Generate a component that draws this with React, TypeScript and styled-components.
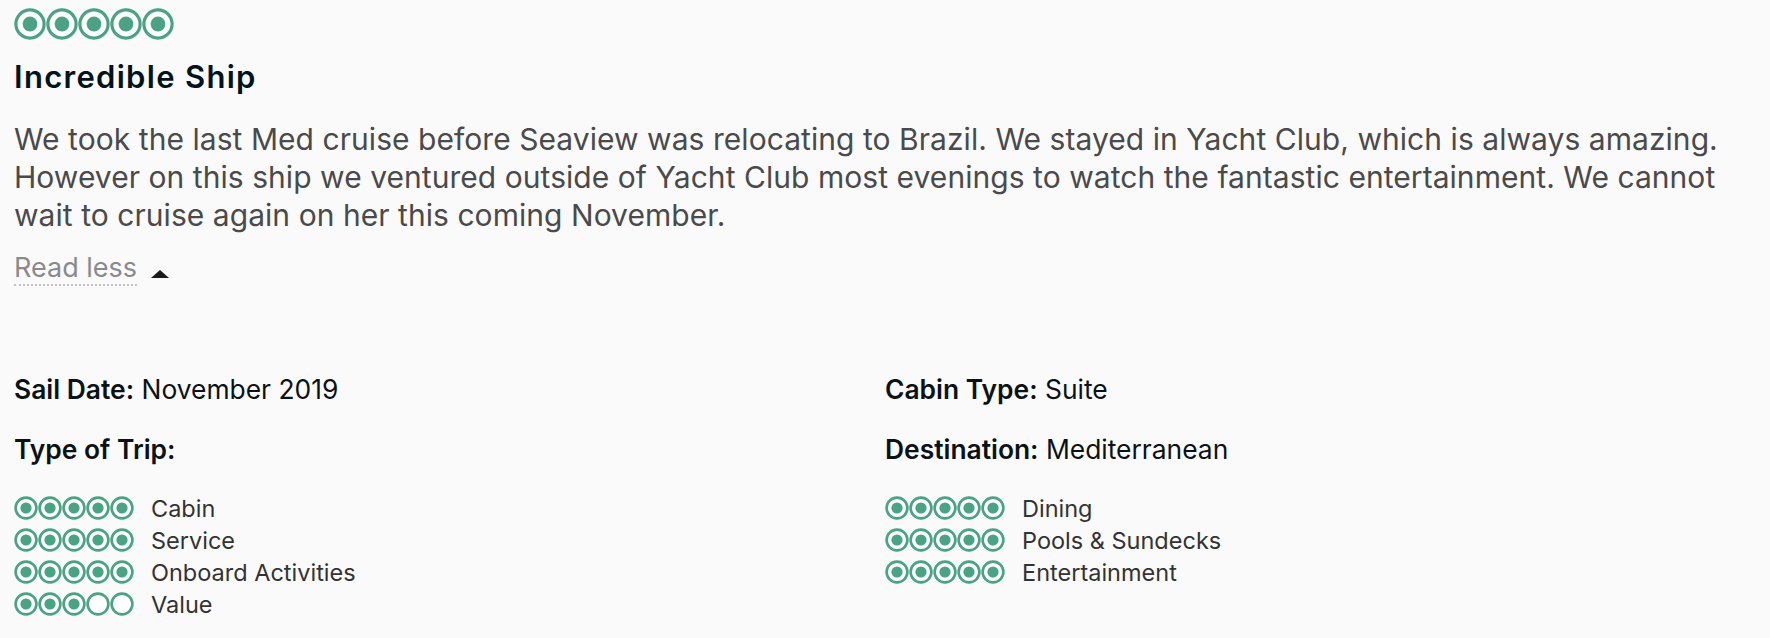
import React from "react";
import styled, { createGlobalStyle } from "styled-components";

const GlobalStyle = createGlobalStyle`
  html, body {
    margin: 0;
    padding: 0;
    background: #fafafa;
  }
  body {
    font-family: "Inter", "Liberation Sans", sans-serif;
  }
`;

const GREEN = "#4aa382";

const Page = styled.div`
  box-sizing: border-box;
  width: 1770px;
  padding: 8px 14px 0 14px;
`;

const BubbleRow = styled.div<{ $size: number }>`
  display: flex;
  flex: none;
  height: ${(p) => p.$size}px;
`;

const BubbleSvg = styled.svg<{ $size: number }>`
  display: block;
  width: ${(p) => p.$size}px;
  height: ${(p) => p.$size}px;
  flex: none;
`;

function Bubbles({ rating, size }: { rating: number; size: number }) {
  const stroke = size > 28 ? 3.2 : 2.6;
  const r = size / 2 - stroke / 2 - 0.3;
  const inner = size > 28 ? 7.4 : 5.6;
  return (
    <BubbleRow $size={size}>
      {[0, 1, 2, 3, 4].map((i) => (
        <BubbleSvg key={i} $size={size} viewBox={`0 0 ${size} ${size}`}>
          <circle cx={size / 2} cy={size / 2} r={r} fill="#fff" stroke={GREEN} strokeWidth={stroke} />
          {i < rating && <circle cx={size / 2} cy={size / 2} r={inner} fill={GREEN} />}
        </BubbleSvg>
      ))}
    </BubbleRow>
  );
}

const Title = styled.h2`
  margin: 19px 0 0 0;
  font-size: 31px;
  line-height: 36px;
  font-weight: 600;
  color: #02131c;
  letter-spacing: 1.3px;
`;

const Body = styled.p`
  margin: 25px 0 0 0;
  font-size: 30px;
  line-height: 38px;
  font-weight: 400;
  color: #4a4a4a;
  letter-spacing: 0.05px;
  max-width: 1748px;
`;

const ReadLess = styled.button`
  display: flex;
  align-items: center;
  gap: 14px;
  margin: 18px 0 0 0;
  padding: 0;
  border: none;
  background: none;
  font-family: inherit;
  cursor: pointer;
`;

const ReadLessText = styled.span`
  font-size: 27px;
  line-height: 32px;
  color: #8a8a8a;
  border-bottom: 2px dotted #c4c4c4;
`;

const Caret = styled.span`
  width: 0;
  height: 0;
  margin-top: 9px;
  border-left: 9px solid transparent;
  border-right: 9px solid transparent;
  border-bottom: 8px solid #1a1a1a;
`;

const Details = styled.div`
  display: grid;
  grid-template-columns: 1fr 1fr;
  margin-top: 87px;
  width: 1742px;
`;

const Column = styled.div`
  display: flex;
  flex-direction: column;
`;

const Field = styled.div`
  font-size: 26.4px;
  line-height: 32px;
  color: #0b1215;
  margin-bottom: 28px;
`;

const FieldLabel = styled.span`
  font-weight: 600;
`;

const Ratings = styled.div`
  display: flex;
  flex-direction: column;
  margin-top: -1px;
`;

const RatingRow = styled.div`
  display: flex;
  align-items: center;
  height: 32px;
  gap: 17px;
`;

const RatingLabel = styled.span`
  font-size: 23.5px;
  color: #333333;
`;

type Rating = { label: string; value: number };

const left: Rating[] = [
  { label: "Cabin", value: 5 },
  { label: "Service", value: 5 },
  { label: "Onboard Activities", value: 5 },
  { label: "Value", value: 3 },
];

const right: Rating[] = [
  { label: "Dining", value: 5 },
  { label: "Pools & Sundecks", value: 5 },
  { label: "Entertainment", value: 5 },
];

function RatingList({ items }: { items: Rating[] }) {
  return (
    <Ratings>
      {items.map((r) => (
        <RatingRow key={r.label}>
          <Bubbles rating={r.value} size={24} />
          <RatingLabel>{r.label}</RatingLabel>
        </RatingRow>
      ))}
    </Ratings>
  );
}

export default function App() {
  return (
    <>
      <GlobalStyle />
      <Page>
        <Bubbles rating={5} size={32} />
        <Title>Incredible Ship</Title>
        <Body>
          We took the last Med cruise before Seaview was relocating to Brazil. We stayed in Yacht Club, which is always
          amazing. However on this ship we ventured outside of Yacht Club most evenings to watch the fantastic
          entertainment. We cannot wait to cruise again on her this coming November.
        </Body>
        <ReadLess>
          <ReadLessText>Read less</ReadLessText>
          <Caret />
        </ReadLess>
        <Details>
          <Column>
            <Field>
              <FieldLabel>Sail Date:</FieldLabel> November 2019
            </Field>
            <Field>
              <FieldLabel>Type of Trip:</FieldLabel>
            </Field>
            <RatingList items={left} />
          </Column>
          <Column>
            <Field>
              <FieldLabel>Cabin Type:</FieldLabel> Suite
            </Field>
            <Field>
              <FieldLabel>Destination:</FieldLabel> Mediterranean
            </Field>
            <RatingList items={right} />
          </Column>
        </Details>
      </Page>
    </>
  );
}
